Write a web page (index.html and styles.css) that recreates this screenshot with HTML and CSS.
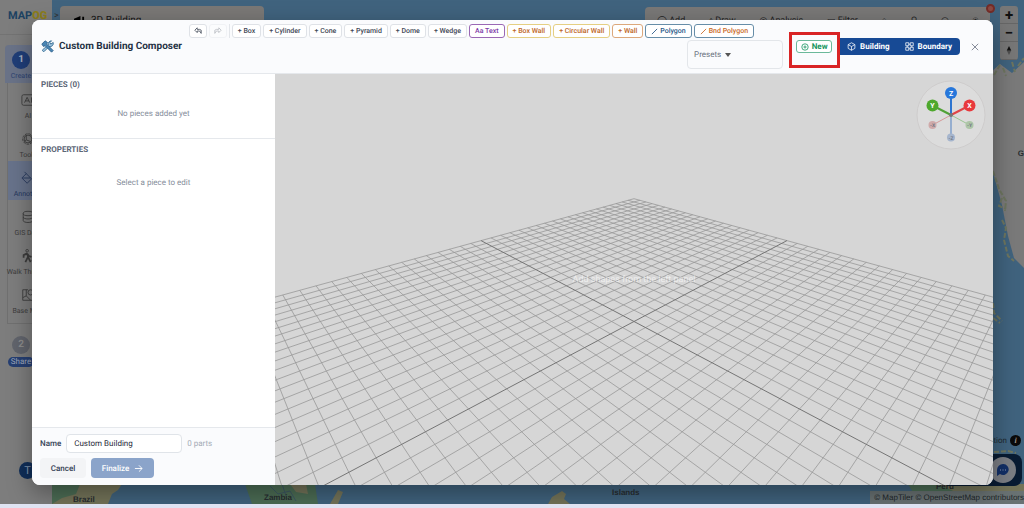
FILE: index.html
```html
<!DOCTYPE html>
<html lang="en">
<head>
<meta charset="utf-8">
<title>Custom Building Composer</title>
<link rel="stylesheet" href="styles.css">
</head>
<body>
<div class="app">
  <svg class="map" viewBox="0 0 1024 504" preserveAspectRatio="none" aria-hidden="true">
    <path class="land" d="M52 484H122L118 490 112 494 108 504H52Z"/>
    <path class="green" d="M52 484H80L76 494 62 498 52 504Z"/>
    <path class="green" d="M245 484H315L318 504H252Z"/>
    <path class="land" d="M290 484H306L308 494 296 492Z"/>
    <path class="river" d="M270 486l8 8 12-3 6 10M282 484l4 12"/>
    <path class="land" d="M548 504l4-7 10-6 4 3-2 5 6 5Z"/>
    <path class="land" d="M330 504l8-14 5 2-5 12Z"/>
    <path class="green" d="M908 484H1024V504H930L915 496Z"/>
    <path class="land" d="M938 484H1024V494H960Z"/>
    <path class="snow" d="M990 73L1000 64 1012 73 1024 62V268L1014 258 1008 236 1002 205 993 172Z"/>
    <path class="coast" d="M993 171l6 18 7 12-1 10M1002 198l-3 8 7 3M1002 220l4 8-2 12 4 16 6 5M993 303l1 10 8 8M993 318l7 5M994 75l6-10M1003 68l3 8M1012 62l3 10M1018 66l6-8"/>
    <path class="coast" d="M994 452l14-1 8 2"/>
  </svg>
  <span class="place p-brazil">Brazil</span>
  <span class="place p-zambia">Zambia</span>
  <span class="place p-islands">Islands</span>
  <span class="place p-peru">Peru</span>
  <span class="place p-gr">G</span>

  <aside class="rail">
    <div class="brand">MAP<b>OG</b></div>
    <nav class="rail-nav">
      <a class="step active" href="#"><span class="num">1</span>Create</a>
      <div class="tools-list">
        <a class="tool" href="#"><svg viewBox="0 0 16 16"><path d="M15 2H3a2 2 0 0 0-2 2v8a2 2 0 0 0 2 2h12M4 11l3-6 3 6M5 9h4M12 5v6"/></svg>AI</a>
        <a class="tool" href="#"><svg viewBox="0 0 16 16"><circle cx="8" cy="8" r="6" stroke-dasharray="3 1"/><circle cx="8" cy="8" r="4.500"/><path d="M6 4v5l5 2M6 9l-2 2"/></svg>Tools</a>
        <a class="tool current" href="#"><svg viewBox="0 0 16 16"><path d="M4 1l8 8-5 5-6-6 5-5M2 8h9M14 11c2 3 0 4 0 4s-2-1 0-4"/></svg>Annotate</a>
        <a class="tool" href="#"><svg viewBox="0 0 16 16"><ellipse cx="8" cy="4" rx="5.500" ry="2.500"/><path d="M2.500 4v8c0 3 11 3 11 0V4M2.500 8c0 3 11 3 11 0"/></svg>GIS Data</a>
        <a class="tool" href="#"><svg viewBox="0 0 16 16"><circle cx="7" cy="2" r="1.500"/><path d="M7 5L3 7v3M7 5l1 4-3 6M8 9l3 6M7 5l2 3 3 1" stroke-width="2"/><path d="M12 13h4"/></svg>Walk Through</a>
        <a class="tool" href="#"><svg viewBox="0 0 16 16"><path d="M8 2H2v12h12v-4M6 2v7l-4 2M6 9l5 5"/><circle cx="11" cy="5" r="3"/></svg>Base Map</a>
      </div>
      <a class="step share" href="#"><span class="num">2</span><span class="pill">Share</span></a>
    </nav>
    <span class="avatar">T</span>
  </aside>

  <span class="chevron">&gt;</span>
  <div class="search"><svg viewBox="0 0 12 12"><path d="M0 4L7 1v11H0zM9 2h2v10H9z"/></svg>3D Building</div>
  <div class="topbar"><span>◯ Add</span><span>⬨ Draw</span><span>◎ Analysis</span><span>▭ Filter</span><span>⌂</span><span>⚲</span><span>◠</span><span>⍟</span></div>
  <span class="alert-dot"></span>
  <div class="zoom-ctl"><button aria-label="Zoom in">+</button><button aria-label="Zoom out">−</button><button aria-label="North"><svg viewBox="0 0 8 12"><path d="M4 0l3 6H1z"/><path d="M1 6h6l-3 6z" opacity=".4"/></svg></button></div>
  <div class="info">Attribution <i>i</i></div>
  <div class="chat"><span><svg viewBox="0 0 12 12"><path d="M6 0a5.500 5.500 0 1 1-3 10L0 12V6a6 6 0 0 1 6-6z"/><path class="dots" d="M3 6h1M5.500 6h1M8 6h1"/></svg></span></div>
  <div class="credit">© MapTiler © OpenStreetMap contributors</div>

  <div class="backdrop">
    <section class="modal" role="dialog" aria-label="Custom Building Composer">
      <header class="head">
        <h1><svg viewBox="0 0 16 16" aria-hidden="true"><path class="wrench" d="M15 3l-3 2-1-2 2-2a4 4 0 0 0-4 5L2 12a1.500 1.500 0 0 0 2 2l6-6a4 4 0 0 0 5-5z"/><path class="hammer" d="M1 5l4-4 3 2-1 2 8 8-2 2-8-8-2 1z"/></svg>Custom Building Composer</h1>
        <div class="tools">
          <div class="row">
            <button class="chip icon" aria-label="Undo"><svg viewBox="0 0 10 10"><path d="M4 1L1 4l3 3V5h3l2 3V4L7 3H4z"/></svg></button>
            <button class="chip icon off" aria-label="Redo" disabled><svg viewBox="0 0 10 10"><path d="M6 1l3 3-3 3V5H3L1 8V4l2-1h3z"/></svg></button>
            <span class="sep"></span>
            <button class="chip">+ Box</button><button class="chip">+ Cylinder</button><button class="chip">+ Cone</button><button class="chip">+ Pyramid</button><button class="chip">+ Dome</button><button class="chip">+ Wedge</button>
            <button class="chip purple">Aa Text</button><button class="chip amber">+ Box Wall</button><button class="chip amber">+ Circular Wall</button><button class="chip orange">+ Wall</button>
            <button class="chip blue"><svg viewBox="0 0 8 8"><path d="M1 7l6-6"/></svg>Polygon</button><button class="chip blue bnd"><svg viewBox="0 0 8 8"><path d="M1 7l6-6"/></svg>Bnd Polygon</button>
          </div>
          <button class="presets">Presets <i></i></button>
        </div>
        <div class="actions">
          <div class="focus"><button class="new"><svg viewBox="0 0 10 10"><circle cx="5" cy="5" r="4"/><path d="M3 5h4M5 3v4"/></svg>New</button></div>
          <div class="toggle">
            <button><svg viewBox="0 0 12 12"><path d="M6 1l4.500 2.500v5L6 11 1.500 8.500v-5zM1.500 3.500L6 6l4.500-2.500M6 6v5"/></svg>Building</button>
            <button><svg viewBox="0 0 12 12"><path d="M1 1h4v4H1zM7 1h4v4H7zM1 7h4v4H1zM7 7h4v4H7zM3 5v2M9 5v2M5 3h2M5 9h2"/></svg>Boundary</button>
          </div>
          <button class="close" aria-label="Close"><svg viewBox="0 0 10 10"><path d="M1 1l8 8M9 1L1 9"/></svg></button>
        </div>
      </header>
      <div class="body">
        <aside class="side">
          <section class="pieces"><h2>PIECES (0)</h2><p>No pieces added yet</p></section>
          <section class="props"><h2>PROPERTIES</h2><p>Select a piece to edit</p></section>
          <footer class="foot">
            <div class="line"><label for="name">Name</label><input id="name" type="text" value="Custom Building"><span>0 parts</span></div>
            <div class="line"><button class="cancel">Cancel</button><button class="final">Finalize <svg viewBox="0 0 10 10"><path d="M1 5h8M5.500 1.500L9 5 5.500 8.500"/></svg></button></div>
          </footer>
        </aside>
        <main class="view">
          <svg class="grid" viewBox="0 0 718 412" preserveAspectRatio="xMidYMid slice" aria-hidden="true"><path id="minor"/><path id="axes"/></svg>
          <p class="hint">Add shapes from the left panel</p>
          <svg class="gizmo" viewBox="0 0 70 70" aria-label="Axis orientation">
            <circle class="disc" cx="35" cy="35" r="34"/>
            <path d="M35 35L16.500 45" stroke="#d59a9a"/><path d="M35 35L53.500 45" stroke="#9bc693"/><path d="M35 35V57" stroke="#7f9fcb" stroke-width="1.500"/>
            <circle cx="16.500" cy="45" r="4" fill="#cfaaaa"/><circle cx="53.500" cy="45" r="4" fill="#adc5a7"/><circle cx="35" cy="57.500" r="4" fill="#a5b5cd"/>
            <path d="M35 35L16.500 25.500" stroke="#51a136" stroke-width="2"/><path d="M35 35L53.500 25.500" stroke="#e04446" stroke-width="2"/><path d="M35 35V13" stroke="#2e75d0" stroke-width="2"/>
            <circle cx="16.500" cy="25.500" r="6" fill="#4ea82c"/><circle cx="53.500" cy="25.500" r="6" fill="#e8393d"/><circle cx="35" cy="13" r="6" fill="#2777db"/><circle cx="35" cy="35" r="2" fill="#777"/>
            <text x="35" y="15.500">Z</text><text x="16.500" y="28">Y</text><text x="53.500" y="28">X</text>
            <g class="neg"><text x="16.500" y="47">-X</text><text x="53.500" y="47">-Y</text><text x="35" y="59.500">-Z</text></g>
          </svg>
        </main>
      </div>
    </section>
  </div>
</div>
<script src="grid.js"></script>
</body>
</html>
```
FILE: styles.css
```css
* { box-sizing: border-box; }
body { margin: 0; background: #dfe3f2; font-family: Roboto, "Liberation Sans", sans-serif; font-size: 8px; color: #334155; text-rendering: geometricPrecision; }
button, input { font: inherit; color: inherit; margin: 0; text-rendering: inherit; }
button { display: inline-flex; align-items: center; justify-content: center; white-space: nowrap; }
svg { fill: none; stroke: currentColor; flex: none; }
h1, h2, p { margin: 0; }
a { color: inherit; text-decoration: none; }

.app { position: relative; height: calc(100vh - 4px); overflow: hidden; background: #40637e; }
.map { position: absolute; inset: 0; width: 100%; height: 100%; stroke: none; }
.land { fill: #747459; }
.green { fill: #4c6d55; }
.snow { fill: #7a7a7a; }
.coast { fill: none; stroke: #6d755f; stroke-width: 2; stroke-dasharray: 5 2; }
.river { fill: none; stroke: #3d5863; }
.place { position: absolute; font: bold 8px/9px "Liberation Sans", sans-serif; color: #272c30; }
.p-brazil { left: 73px; bottom: 0; }
.p-zambia { left: 264px; bottom: 2px; }
.p-islands { left: 612px; bottom: 7px; }
.p-peru { left: 936px; bottom: 13px; }
.p-gr { right: 0; top: 149px; }

.rail { position: relative; width: 52px; height: 100%; background: #7d7d7d; color: #3c3c3c; }
.brand { height: 35px; padding: 9px 0 0 8px; border-bottom: 1px solid #737373; font: bold 11px/14px Roboto, sans-serif; color: #1c4262; }
.brand b { color: #8c7d1c; }
.rail-nav { padding: 10px 0 0 5px; font-size: 7px; line-height: 8px; }
.step { display: flex; flex-direction: column; align-items: center; width: 32px; height: 38px; padding-top: 6px; gap: 3px; color: #2c4270; }
.step.active { background: #6a7388; width: 47px; padding-right: 15px; border-radius: 4px 0 0 0; }
.num { width: 18px; height: 18px; border-radius: 50%; background: #203e78; color: #a5afc1; font: bold 10px/18px Roboto, sans-serif; text-align: center; flex: none; }
.tools-list { margin-left: 2px; border-left: 1px solid #707070; border-bottom: 1px solid #707070; padding-bottom: 6px; }
.tool { display: flex; flex-direction: column; align-items: center; gap: 5px; height: 39px; padding: 10px 4px 0 0; white-space: nowrap; }
.tool svg { width: 14px; height: 14px; }
.tool.current { background: #68738b; color: #26375c; }
.step.share { margin-top: 6px; }
.share .num { background: #61646c; color: #8a8a8a; }
.pill { padding: 1px 3px; border-radius: 5px; background: #263f72; color: #9aa5ba; font-size: 8px; }
.avatar { position: absolute; left: 19px; bottom: 25px; width: 17px; height: 17px; border-radius: 50%; background: #102e58; color: #8095ae; font-size: 11px; line-height: 17px; text-align: center; }
.chevron { position: absolute; left: 54px; top: 11px; font-size: 9px; color: #333; }
.search { position: absolute; left: 60px; top: 6px; width: 204px; height: 30px; padding: 9px 14px; border-radius: 4px; background: #7a7876; color: #161616; font-size: 10px; line-height: 12px; display: flex; gap: 6px; }
.search svg { width: 11px; height: 11px; fill: #000; stroke: none; }
.topbar { position: absolute; left: 645px; right: 34px; top: 7px; height: 30px; border-radius: 4px; background: #797877; color: #222; display: flex; justify-content: space-around; padding-top: 8px; font-size: 9px; line-height: 12px; }
.alert-dot { position: absolute; right: 29px; top: 4px; width: 9px; height: 9px; border: 2px solid #742c27; border-radius: 50%; background: #8c4942; }
.zoom-ctl { position: absolute; right: 6px; top: 6px; width: 18px; border-radius: 3px; background: #777; overflow: hidden; }
.zoom-ctl button { width: 18px; height: 18px; padding: 0; border: 0; border-bottom: 1px solid #666; background: none; color: #111; font: bold 15px/16px Roboto, sans-serif; }
.zoom-ctl svg { width: 6px; height: 9px; fill: #111; stroke: none; }
.info { position: absolute; right: 3px; bottom: 58px; display: flex; align-items: center; gap: 3px; color: #1f2930; }
.info i { width: 11px; height: 11px; border-radius: 50%; background: #0a0a0a; color: #a29a90; text-align: center; font: italic bold 8px/11px "Liberation Serif", serif; }
.chat { position: absolute; right: 2px; bottom: 18px; width: 80px; height: 32px; border-radius: 8px; background: #081b32; }
.chat span { position: absolute; right: 6px; top: 3px; width: 26px; height: 26px; border-radius: 50%; background: #7b7e84; display: grid; place-items: center; }
.chat svg { width: 12px; height: 12px; fill: #122f66; stroke: none; }
.chat .dots { stroke: #8c9ab5; }
.credit { position: absolute; right: 0; bottom: 0; padding: 1px 0 1px 4px; background: #697273; color: #20262a; font: 8px/11px "Liberation Sans", sans-serif; }

.backdrop { position: absolute; inset: 0; padding: 20px 31px 19px 32px; }
.modal { height: 100%; display: flex; flex-direction: column; border-radius: 8px; background: #fff; box-shadow: 0 8px 24px rgba(0, 0, 0, .35); }
.head { flex: none; display: flex; min-height: 54px; padding-left: 9px; border-bottom: 1px solid #e5e8ec; border-radius: 8px 8px 0 0; background: #fafbfd; }
h1 { align-self: center; display: flex; align-items: center; gap: 5px; font-size: 10px; font-weight: 700; color: #253244; white-space: nowrap; }
h1 svg { width: 13px; height: 13px; stroke-width: 1; }
.hammer { fill: #4b86b4; stroke: #2b5c88; }
.wrench { fill: #9dc3dd; stroke: #2b628c; }
.tools { flex: 1; min-width: 0; display: flex; flex-direction: column; align-items: flex-end; padding: 4px 0 0; }
.row { display: flex; gap: 2px; margin-right: 29px; }
.chip { height: 14px; padding: 0 5px; gap: 2px; border: 1px solid #dfe2e7; border-radius: 3px; background: #fff; color: #3f4856; font-size: 7px; line-height: 10px; font-weight: 500; }
.chip svg { width: 7px; height: 7px; }
.icon { width: 18px; }
.icon svg { width: 8px; height: 8px; }
.off { opacity: .35; }
.sep { width: 1px; background: #e3e6ea; }
.purple { color: #7d3ba8; border-color: #9a68b5; }
.amber { color: #bd6526; border-color: #e5cf83; }
.orange { color: #bd6526; border-color: #dca87c; }
.blue { color: #285888; border-color: #668da8; }
.bnd { color: #c96a28; }
.presets { width: 96px; height: 29px; margin-top: 2px; padding: 0 6px; gap: 4px; justify-content: flex-start; border: 1px solid #e3e6ea; border-radius: 4px; background: #fafbfd; color: #697180; }
.presets i { border: 3px solid transparent; border-top: 4px solid #555; border-bottom: 0; }
.actions { flex: none; display: flex; align-items: flex-start; padding: 12px 12px 0 6px; }
.focus { width: 51px; height: 36px; padding: 5px 0 0 4px; border: 3px solid #d92425; }
.new { width: 36px; height: 13px; padding: 0; gap: 3px; border: 1px solid #6bb99a; border-radius: 3px; background: #fff; color: #159560; font-weight: 700; }
.new svg { width: 8px; height: 8px; }
.toggle { display: flex; margin-top: 6px; height: 17px; border-radius: 0 4px 4px 0; background: #174a95; color: #fff; }
.toggle button { padding: 0 8px 0 7px; gap: 4px; border: 0; background: none; font-weight: 700; }
.toggle svg { width: 9px; height: 9px; }
.close { width: 12px; height: 12px; margin: 9px 0 0 9px; padding: 0; border: 0; background: none; color: #687080; }
.close svg { width: 8px; height: 8px; }

.body { flex: 1; min-height: 0; display: grid; grid-template-columns: 243px 1fr; }
.side { display: flex; flex-direction: column; min-height: 0; }
.side section { padding: 6px 9px; }
.pieces { height: 65px; border-bottom: 1px solid #e5e8ec; }
.props { flex: 1; }
h2 { font-size: 8px; line-height: 10px; font-weight: 700; color: #5c6676; }
.side p { margin-top: 18px; text-align: center; line-height: 12px; color: #868e9b; }
.props p { margin-top: 22px; }
.foot { display: grid; gap: 5px; padding: 6px 8px 7px; border-top: 1px solid #e5e8ec; border-radius: 0 0 0 8px; background: #fafbfd; }
.line { display: flex; align-items: center; gap: 5px; }
.line label { font-weight: 500; }
.line input { width: 116px; height: 19px; padding: 0 7px; border: 1px solid #e0e4e9; border-radius: 4px; background: #fff; color: #1f2937; }
.line span { color: #a4abb6; }
.cancel, .final { height: 20px; padding: 0; border: 0; border-radius: 4px; font-weight: 500; }
.cancel { width: 46px; background: #f3f4f6; }
.final { width: 63px; gap: 5px; background: #8ba4ca; color: #fff; }
.final svg { width: 9px; height: 9px; }

.view { position: relative; overflow: hidden; border-radius: 0 0 8px 0; background: #d6d6d6; }
.grid { position: absolute; inset: 0; width: 100%; height: 100%; }
#minor { stroke: #989898; stroke-width: .8; }
#axes { stroke: #757575; stroke-width: 1; }
.hint { position: absolute; inset: 0; display: grid; place-items: center; font-size: 9px; color: rgba(255, 255, 255, .6); }
.gizmo { position: absolute; right: 7px; top: 6px; width: 70px; height: 70px; }
.disc { fill: #dcdcdc; stroke: #cecccc; }
.gizmo circle:not(.disc) { stroke: none; }
.gizmo text { fill: #fff; stroke: none; font: bold 7px Roboto, sans-serif; text-anchor: middle; }
.gizmo .neg text { font-size: 5px; fill: #737985; }
```
FILE: grid.js
```js
// Projects a square ground grid, seen along its diagonal, into the viewport.
const HALF = 20;
const VIEW = { cx: 359, horizon: -7, spread: 448, drop: 255, tilt: 0.929 };

function project(x, z) {
  const u = (x - z) / (2 * HALF);
  const v = (x + z) / (2 * HALF);
  const w = 1 / (1 - VIEW.tilt * v);
  return (VIEW.cx + VIEW.spread * u * w).toFixed(2) + " " + (VIEW.horizon + VIEW.drop * w).toFixed(2);
}

function segment(x1, z1, x2, z2) {
  return "M" + project(x1, z1) + "L" + project(x2, z2);
}

function cross(i) {
  return segment(i, -HALF, i, HALF) + segment(-HALF, i, HALF, i);
}

let minor = "";
for (let i = -HALF; i <= HALF; i++) {
  if (i !== 0) minor += cross(i);
}
document.getElementById("minor").setAttribute("d", minor);
document.getElementById("axes").setAttribute("d", cross(0));
```
